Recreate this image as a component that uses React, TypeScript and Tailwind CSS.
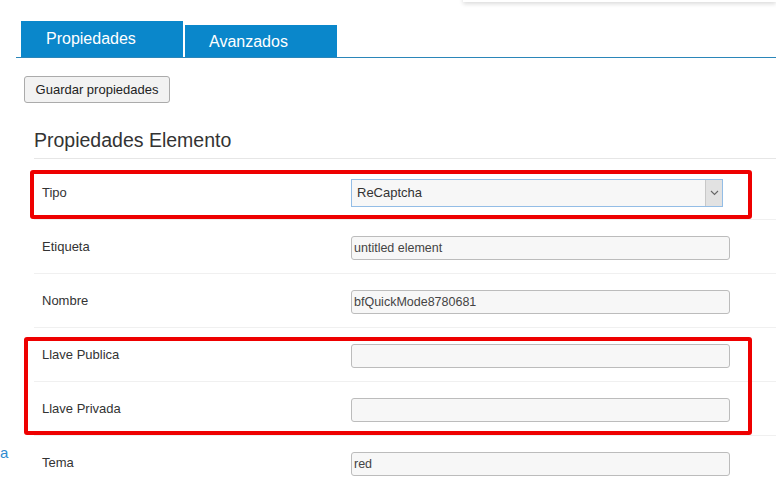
import React from "react";

type Row = { label: string; value?: string; select?: boolean };

const rows: Row[] = [
  { label: "Tipo", value: "ReCaptcha", select: true },
  { label: "Etiqueta", value: "untitled element" },
  { label: "Nombre", value: "bfQuickMode8780681" },
  { label: "Llave Publica", value: "" },
  { label: "Llave Privada", value: "" },
  { label: "Tema", value: "red" },
];

export default function App() {
  return (
    <div className="relative w-[776px] h-[483px] overflow-hidden bg-white font-['Liberation_Sans',Arial,sans-serif] text-[#333]">
      {/* top-right panel edge with shadow */}
      <div className="absolute -top-[10px] left-[463px] right-0 h-[12px] bg-white shadow-[0_2px_4px_rgba(0,0,0,0.14)]" />

      {/* tabs */}
      <div className="ml-[16px] pt-[21px] border-b border-[#2b86b9]">
        <div className="flex items-end gap-[2px] pl-[5px]">
          <div className="w-[162px] h-[36px] bg-[#0a87cb] text-white text-[16px] pl-[25px] flex items-center">
            Propiedades
          </div>
          <div className="w-[152px] h-[32px] bg-[#0a87cb] text-white text-[16px] pl-[24px] flex items-center pt-[2px]">
            Avanzados
          </div>
        </div>
      </div>

      {/* save button */}
      <div className="ml-[24px] mt-[18px]">
        <button className="w-[146px] h-[27px] bg-[#f2f2f2] border border-[#ababab] rounded-[3px] text-[13px] text-[#222] flex items-center justify-center">
          Guardar propiedades
        </button>
      </div>

      {/* heading */}
      <div className="ml-[34px] mt-[25px] pb-[6px] border-b border-[#e6e6e6]">
        <div className="text-[19.5px] leading-[24px] text-[#333]">Propiedades Elemento</div>
      </div>

      {/* rows */}
      <div className="ml-[34px] mt-[7px]">
        {rows.map((r) => (
          <div
            key={r.label}
            className="h-[54px] flex items-center pl-[8px] border-b border-[#f0f0f0]"
          >
            <div className="w-[309px] text-[13px] text-[#333]">{r.label}</div>
            {r.select ? (
              <div className="w-[372px] h-[28px] flex border border-[#93bde6] bg-[#f7f7f7]">
                <div className="flex-1 flex items-center pl-[5px] text-[13px] text-[#333]">
                  {r.value}
                </div>
                <div className="w-[17px] bg-[#e2e2e2] border-l border-[#c8c8c8] flex items-center justify-center">
                  <svg width="9" height="6" viewBox="0 0 9 6" fill="none">
                    <path d="M1 1 L4.5 4.5 L8 1" stroke="#666" strokeWidth="1.1" />
                  </svg>
                </div>
              </div>
            ) : (
              <div className="mt-[3px] w-[379px] h-[24px] border border-[#bcbcbc] rounded-[3px] bg-[#f7f7f7] flex items-center pl-[2px] text-[12.5px] text-[#444]">
                {r.value}
              </div>
            )}
          </div>
        ))}
      </div>

      {/* annotation boxes */}
      <div className="absolute left-[30px] top-[170px] w-[722px] h-[49px] border-[4px] border-[#ee0000] rounded-[3px]" />
      <div className="absolute left-[24px] top-[337px] w-[728px] h-[98px] border-[4px] border-[#ee0000] rounded-[3px]" />

      {/* link fragment */}
      <div className="absolute left-0 top-[443px] text-[15px] leading-[20px] text-[#2f8bd0]">a</div>
    </div>
  );
}
